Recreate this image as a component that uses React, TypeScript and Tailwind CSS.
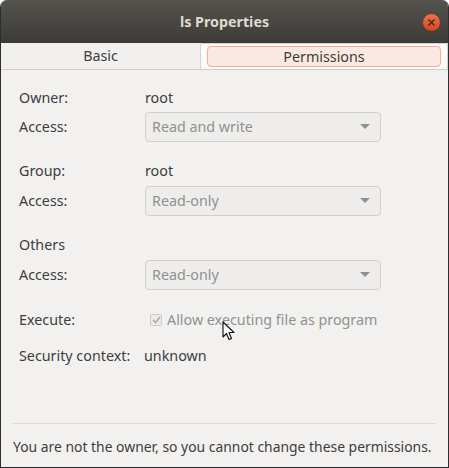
import React from "react";

function Combo({ value }: { value: string }) {
  return (
    <div className="flex h-[30px] w-[236px] items-center justify-between rounded-[4px] border border-[#d3cfca] bg-[#eeedeb] pl-[6px] pr-[10px]">
      <span className="text-[#8e9192]">{value}</span>
      <svg width="10" height="6" viewBox="0 0 10 6">
        <path d="M0 0 L10 0 L5 5 Z" fill="#8e9192" />
      </svg>
    </div>
  );
}

function Row({
  label,
  className = "h-[24px]",
  children,
}: {
  label: string;
  className?: string;
  children?: React.ReactNode;
}) {
  return (
    <div className={`flex items-center ${className}`}>
      <div className="w-[126px] shrink-0">{label}</div>
      {children}
    </div>
  );
}

export default function App() {
  return (
    <div
      className="relative h-[468px] w-[449px] bg-white text-[14.3px] leading-[22px] text-[#3d3d3d]"
      style={{ fontFamily: '"Noto Sans", "DejaVu Sans", sans-serif' }}
    >
      <div className="flex h-full flex-col overflow-hidden rounded-t-[7px] border-x border-b border-[#2d2d2d] bg-[#f2f1f0]">
        {/* title bar */}
        <div className="relative flex h-[43px] shrink-0 items-center justify-center bg-gradient-to-b from-[#55534d] to-[#3c3b37]">
          <span className="font-bold text-[#dfdbd2]">ls Properties</span>
          <div className="absolute right-[8px] top-[14px] flex h-[17px] w-[17px] items-center justify-center rounded-full bg-gradient-to-b from-[#f0704a] to-[#d8451a]">
            <svg width="7" height="7" viewBox="0 0 7 7">
              <path d="M0.5 0.5 L6.5 6.5 M6.5 0.5 L0.5 6.5" stroke="#3c2a22" strokeWidth="1.3" />
            </svg>
          </div>
        </div>

        {/* tabs */}
        <div className="flex h-[27px] shrink-0 border-b border-[#cfccc8] bg-[#f1f0ee]">
          <div className="flex w-[199px] items-center justify-center">Basic</div>
          <div className="flex flex-1 items-center rounded-t-[3px] border-x border-t border-[#d6d3cf] bg-[#fbfbfa] px-[6px]">
            <div className="flex h-[21px] flex-1 items-center justify-center rounded-[4px] border border-[#f5ad95] bg-[#fbe8e2]">
              Permissions
            </div>
          </div>
        </div>

        {/* body */}
        <div className="flex flex-1 flex-col px-[18px] pt-[16px]">
          <Row label="Owner:">
            <span>root</span>
          </Row>
          <Row label="Access:" className="mt-[2px] h-[30px]">
            <Combo value="Read and write" />
          </Row>

          <Row label="Group:" className="mt-[17px] h-[24px]">
            <span>root</span>
          </Row>
          <Row label="Access:" className="mt-[3px] h-[30px]">
            <Combo value="Read-only" />
          </Row>

          <Row label="Others" className="mt-[17px] h-[24px]" />
          <Row label="Access:" className="mt-[3px] h-[30px]">
            <Combo value="Read-only" />
          </Row>

          <Row label="Execute:" className="mt-[18px] h-[24px]">
            <div className="ml-[5px] flex items-center gap-[5px] text-[#8e9192]">
              <div className="flex h-[12px] w-[12px] items-center justify-center rounded-[2px] border border-[#cfcbc6] bg-[#ecebe9]">
                <svg width="9" height="8" viewBox="0 0 9 8">
                  <path d="M1 4 L3.5 6.5 L8 1" stroke="#a7a9aa" strokeWidth="1.6" fill="none" />
                </svg>
              </div>
              <span>Allow executing file as program</span>
            </div>
          </Row>

          <div className="mt-[12px] flex h-[24px] items-center">
            <div className="w-[125px] shrink-0">Security context:</div>
            <span>unknown</span>
          </div>
        </div>

        {/* footer */}
        <div className="mx-[12px] h-[44px] shrink-0 whitespace-nowrap border-t border-[#dcd9d6] pt-[12px] text-[13.9px]">
          You are not the owner, so you cannot change these permissions.
        </div>
      </div>

      {/* mouse pointer */}
      <svg className="absolute left-[222px] top-[321px]" width="14" height="20" viewBox="0 0 14 20">
        <path d="M1 1 L1 16 L4.5 12.5 L7 18.5 L9.5 17.5 L7 11.5 L12 11.5 Z" fill="#ffffff" stroke="#1a1a1a" strokeWidth="1.2" strokeLinejoin="round" />
      </svg>
    </div>
  );
}
